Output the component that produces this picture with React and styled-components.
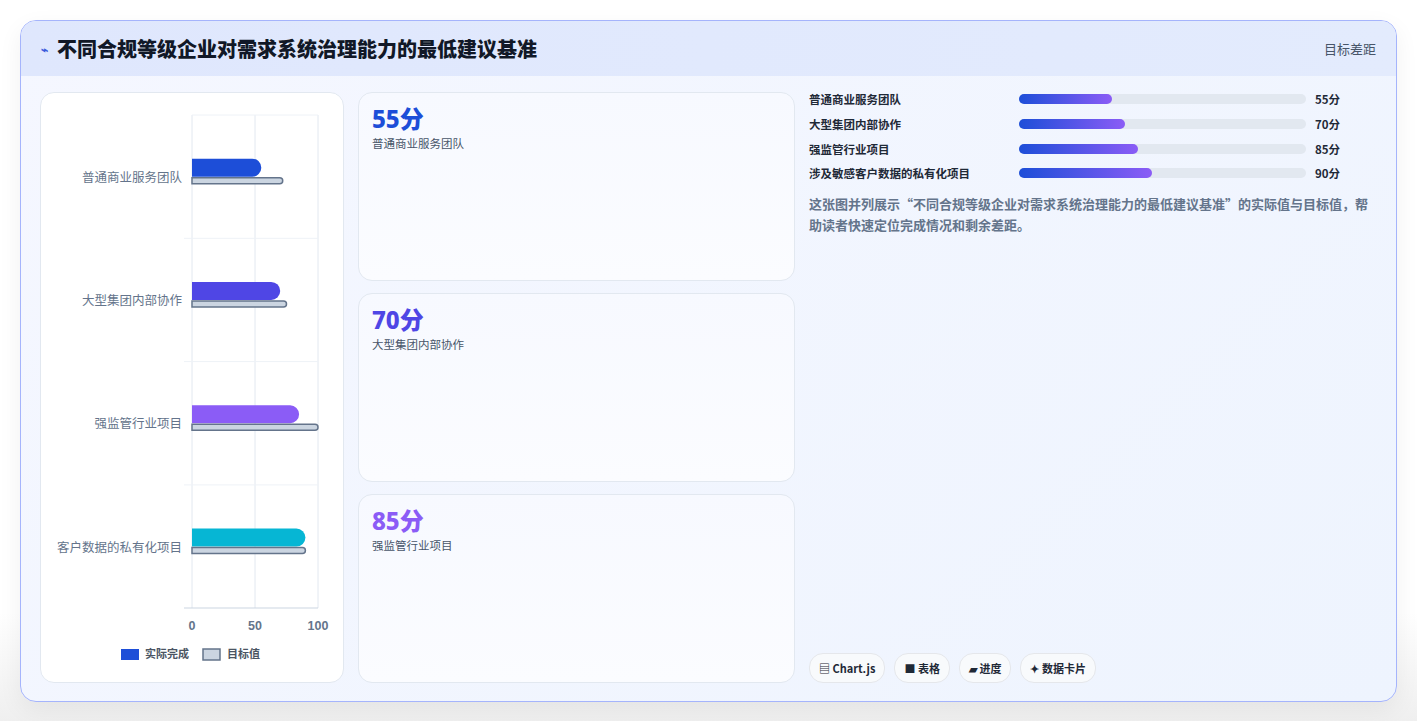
import React from "react";
import styled, { createGlobalStyle } from "styled-components";

const G = createGlobalStyle`
  *{box-sizing:border-box;}
  body{margin:0;background:#f3f4f6;font-family:"Noto Sans CJK SC","Noto Sans",sans-serif;}
`;
const Page = styled.div`padding:20px 20px 19px 20px;background:linear-gradient(#fff 0,#fff 85%,#efefef 100%);`;
const Card = styled.div`
  border:1px solid #a5b4fc;border-radius:16px;overflow:hidden;height:682px;
  background:linear-gradient(135deg,#f5f7ff,#eef4fe);display:flex;flex-direction:column;
  box-shadow:0 8px 24px rgba(0,0,0,.06);
`;
const Header = styled.div`
  height:55px;flex:none;display:flex;align-items:center;justify-content:space-between;
  padding:0 20px;background:linear-gradient(90deg,#dfe7fd,#e3ebfd);
`;
const Title = styled.h1`margin:0;font-size:20px;font-weight:800;color:#111827;display:flex;align-items:center;gap:9px;`;
const Icon = styled.span`color:#3b5bdb;font-size:12px;`;
const Tag = styled.span`font-size:13px;color:#475569;`;
const Body = styled.div`flex:1;display:grid;grid-template-columns:304px 437px 1fr;gap:14px;padding:16px 19px 18px 19px;min-height:0;`;
const Panel = styled.div`background:#fff;border:1px solid #e2e8f0;border-radius:14px;overflow:hidden;`;
const Mid = styled.div`display:grid;grid-template-rows:repeat(3,1fr);gap:12px;min-height:0;`;
const Stat = styled.div`background:linear-gradient(180deg,#f7f9ff,#fbfcff);border:1px solid #e2e8f0;border-radius:14px;padding:10px 13px;`;
const Big = styled.div`font-size:24px;font-weight:800;color:${p=>p.c};line-height:32px;font-family:"Noto Sans","Noto Sans CJK SC",sans-serif;`;
const Small = styled.div`font-size:11.5px;color:#475569;`;
const Right = styled.div`display:flex;flex-direction:column;`;
const Row = styled.div`display:grid;grid-template-columns:210px 296px 1fr;align-items:center;height:24.7px;margin-top:${p=>p.first?"-5px":"0"};`;
const RLabel = styled.span`font-size:11.5px;font-weight:700;color:#1f2937;`;
const Track = styled.div`height:10px;border-radius:5px;background:#e2e8f0;margin-right:9px;`;
const Fill = styled.div`height:100%;border-radius:5px;background:linear-gradient(90deg,#1d4ed8,#8b5cf6);`;
const Val = styled.span`font-size:11.5px;font-weight:700;color:#1f2937;`;
const Desc = styled.p`margin:7px 0 0;font-size:13px;line-height:21px;color:#64748b;font-weight:600;`;
const Chips = styled.div`margin-top:auto;display:flex;gap:9px;`;
const Chip = styled.span`font-size:11px;font-weight:700;color:#1f2937;background:#f8fafc;border:1px solid #e5e7eb;border-radius:14px;padding:6px 9px;`;

const data=[
  {n:"普通商业服务团队",a:55,t:72,c:"#1d4ed8"},
  {n:"大型集团内部协作",a:70,t:75,c:"#4f46e5"},
  {n:"强监管行业项目",a:85,t:100,c:"#8b5cf6"},
  {n:"客户数据的私有化项目",a:90,t:90,c:"#06b6d4"},
];

function Chart(){
  const x0=151,w=126,top=22,bh=123.3;
  return <svg width="302" height="588" viewBox="0 0 302 588">
    {[0,50,100].map(v=><line key={v} x1={x0+w*v/100} x2={x0+w*v/100} y1={top} y2={515} stroke="#e2e8f0"/>)}
    {[1,2,3].map(i=><line key={i} x1={x0-8} x2={x0+w} y1={top+i*bh} y2={top+i*bh} stroke="#eef2f7"/>)}
    <line x1={x0} x2={x0+w} y1={top} y2={top} stroke="#eef2f7"/>
    <line x1={x0-8} x2={x0+w} y1={515} y2={515} stroke="#cbd5e1"/>
    {data.map((d,i)=>{const cy=top+bh*i+bh/2;return <g key={i}>
      <text x={141} y={cy+5} textAnchor="end" fontSize="12.5" fill="#64748b">{d.n}</text>
      <path d={`M${x0} ${cy-18}H${x0+w*d.a/100-9}a9 9 0 0 1 0 18H${x0}Z`} fill={d.c}/>
      <path d={`M${x0} ${cy+1}H${x0+w*d.t/100-3}a3 3 0 0 1 0 6H${x0}Z`} fill="#cbd5e1" stroke="#64748b" strokeWidth="1.5"/>
    </g>})}
    {[0,50,100].map(v=><text key={v} x={x0+w*v/100} y={537} textAnchor="middle" fontSize="12.5" fontWeight="700" fill="#64748b" fontFamily="Liberation Sans,sans-serif">{v}</text>)}
    <rect x="80" y="556" width="18" height="11" fill="#1d4ed8"/>
    <text x="104" y="565" fontSize="11" fontWeight="700" fill="#4b5563">实际完成</text>
    <rect x="162" y="556" width="17" height="11" fill="#cbd5e1" stroke="#64748b" strokeWidth="1.5"/>
    <text x="186" y="565" fontSize="11" fontWeight="700" fill="#4b5563">目标值</text>
  </svg>;
}

export default function App(){
  return <Page><G/><Card>
    <Header><Title><Icon>⌁</Icon>不同合规等级企业对需求系统治理能力的最低建议基准</Title><Tag>目标差距</Tag></Header>
    <Body>
      <Panel><Chart/></Panel>
      <Mid>
        {data.slice(0,3).map(d=><Stat key={d.n}><Big c={d.c}>{d.a}分</Big><Small>{d.n}</Small></Stat>)}
      </Mid>
      <Right>
        {[["普通商业服务团队",55,32.4],["大型集团内部协作",70,37],["强监管行业项目",85,41.5],["涉及敏感客户数据的私有化项目",90,46.3]].map(([n,v,p],i)=>
          <Row key={n} first={i===0}><RLabel>{n}</RLabel><Track><Fill style={{width:p+"%"}}/></Track><Val>{v}分</Val></Row>)}
        <Desc>这张图并列展示“不同合规等级企业对需求系统治理能力的最低建议基准”的实际值与目标值，帮助读者快速定位完成情况和剩余差距。</Desc>
        <Chips><Chip>▤ Chart.js</Chip><Chip>■ 表格</Chip><Chip>▰ 进度</Chip><Chip>✦ 数据卡片</Chip></Chips>
      </Right>
    </Body>
  </Card></Page>;
}
